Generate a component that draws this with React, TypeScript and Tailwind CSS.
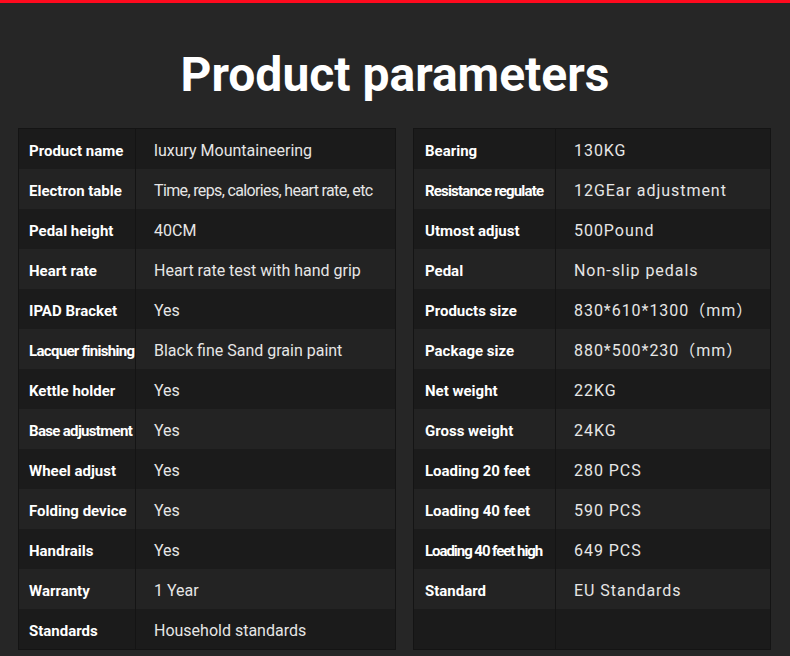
const left: [string, string, string?, string?][] = [
    ['Product name', 'luxury Mountaineering'],
    ['Electron table', 'Time, reps, calories, heart rate, etc', '', 'tracking-[-0.04em]'],
    ['Pedal height', '40CM'],
    ['Heart rate', 'Heart rate test with hand grip'],
    ['IPAD Bracket', 'Yes'],
    ['Lacquer finishing', 'Black fine Sand grain paint', 'tracking-[-0.045em]'],
    ['Kettle holder', 'Yes'],
    ['Base adjustment', 'Yes', 'tracking-[-0.045em]'],
    ['Wheel adjust', 'Yes'],
    ['Folding device', 'Yes'],
    ['Handrails', 'Yes'],
    ['Warranty', '1 Year'],
    ['Standards', 'Household standards'],
];

const right: [string, string, string?, string?][] = [
    ['Bearing', '130KG'],
    ['Resistance regulate', '12GEar adjustment', 'tracking-[-0.055em]'],
    ['Utmost adjust', '500Pound'],
    ['Pedal', 'Non-slip pedals'],
    ['Products size', '830*610*1300（mm）'],
    ['Package size', '880*500*230（mm）'],
    ['Net weight', '22KG'],
    ['Gross weight', '24KG'],
    ['Loading 20 feet', '280 PCS'],
    ['Loading 40 feet', '590 PCS'],
    ['Loading 40 feet high', '649 PCS', 'tracking-[-0.07em]'],
    ['Standard', 'EU Standards'],
    ['', ''],
];

function ParamTable({
    rows,
    labelWidth,
    labelPad,
    spaced,
}: {
    rows: [string, string, string?, string?][];
    labelWidth: string;
    labelPad: string;
    spaced?: boolean;
}) {
    return (
        <div className="border border-[#141414]">
            {rows.map(([label, value, labelTrack, valueTrack], i) => (
                <div
                    key={i}
                    className={`flex h-10 items-center ${i % 2 === 0 ? 'bg-[#1b1b1b]' : 'bg-[#232323]'}`}
                >
                    <div
                        className={`flex h-full shrink-0 items-center border-r border-[#141414] pt-1 ${labelWidth} ${labelPad}`}
                    >
                        <span
                            className={`text-[15px] font-bold whitespace-nowrap text-white ${labelTrack ?? ''}`}
                        >
                            {label}
                        </span>
                    </div>
                    <div
                        className={`pt-1 pl-[18px] text-[16px] whitespace-nowrap text-[#e6e6e6] ${spaced ? 'tracking-[0.06em]' : ''} ${valueTrack ?? ''}`}
                    >
                        {value}
                    </div>
                </div>
            ))}
        </div>
    );
}

export default function App() {
    return (
        <div
            className="min-h-[656px] w-[790px] bg-[#262626]"
            style={{ fontFamily: 'Roboto, "Noto Sans CJK SC", sans-serif' }}
        >
            <div className="h-[3px] bg-[#ff0a1e]" />
            <h1 className="pt-[44px] text-center text-[48px] leading-[56px] font-bold text-white">
                Product parameters
            </h1>
            <div className="mt-[25px] flex gap-[17px] pr-[19px] pl-[18px]">
                <div className="w-[378px]">
                    <ParamTable
                        rows={left}
                        labelWidth="w-[117px]"
                        labelPad="pl-[10px]"
                    />
                </div>
                <div className="w-[358px]">
                    <ParamTable
                        rows={right}
                        labelWidth="w-[142px]"
                        labelPad="pl-[11px]"
                        spaced
                    />
                </div>
            </div>
        </div>
    );
}
